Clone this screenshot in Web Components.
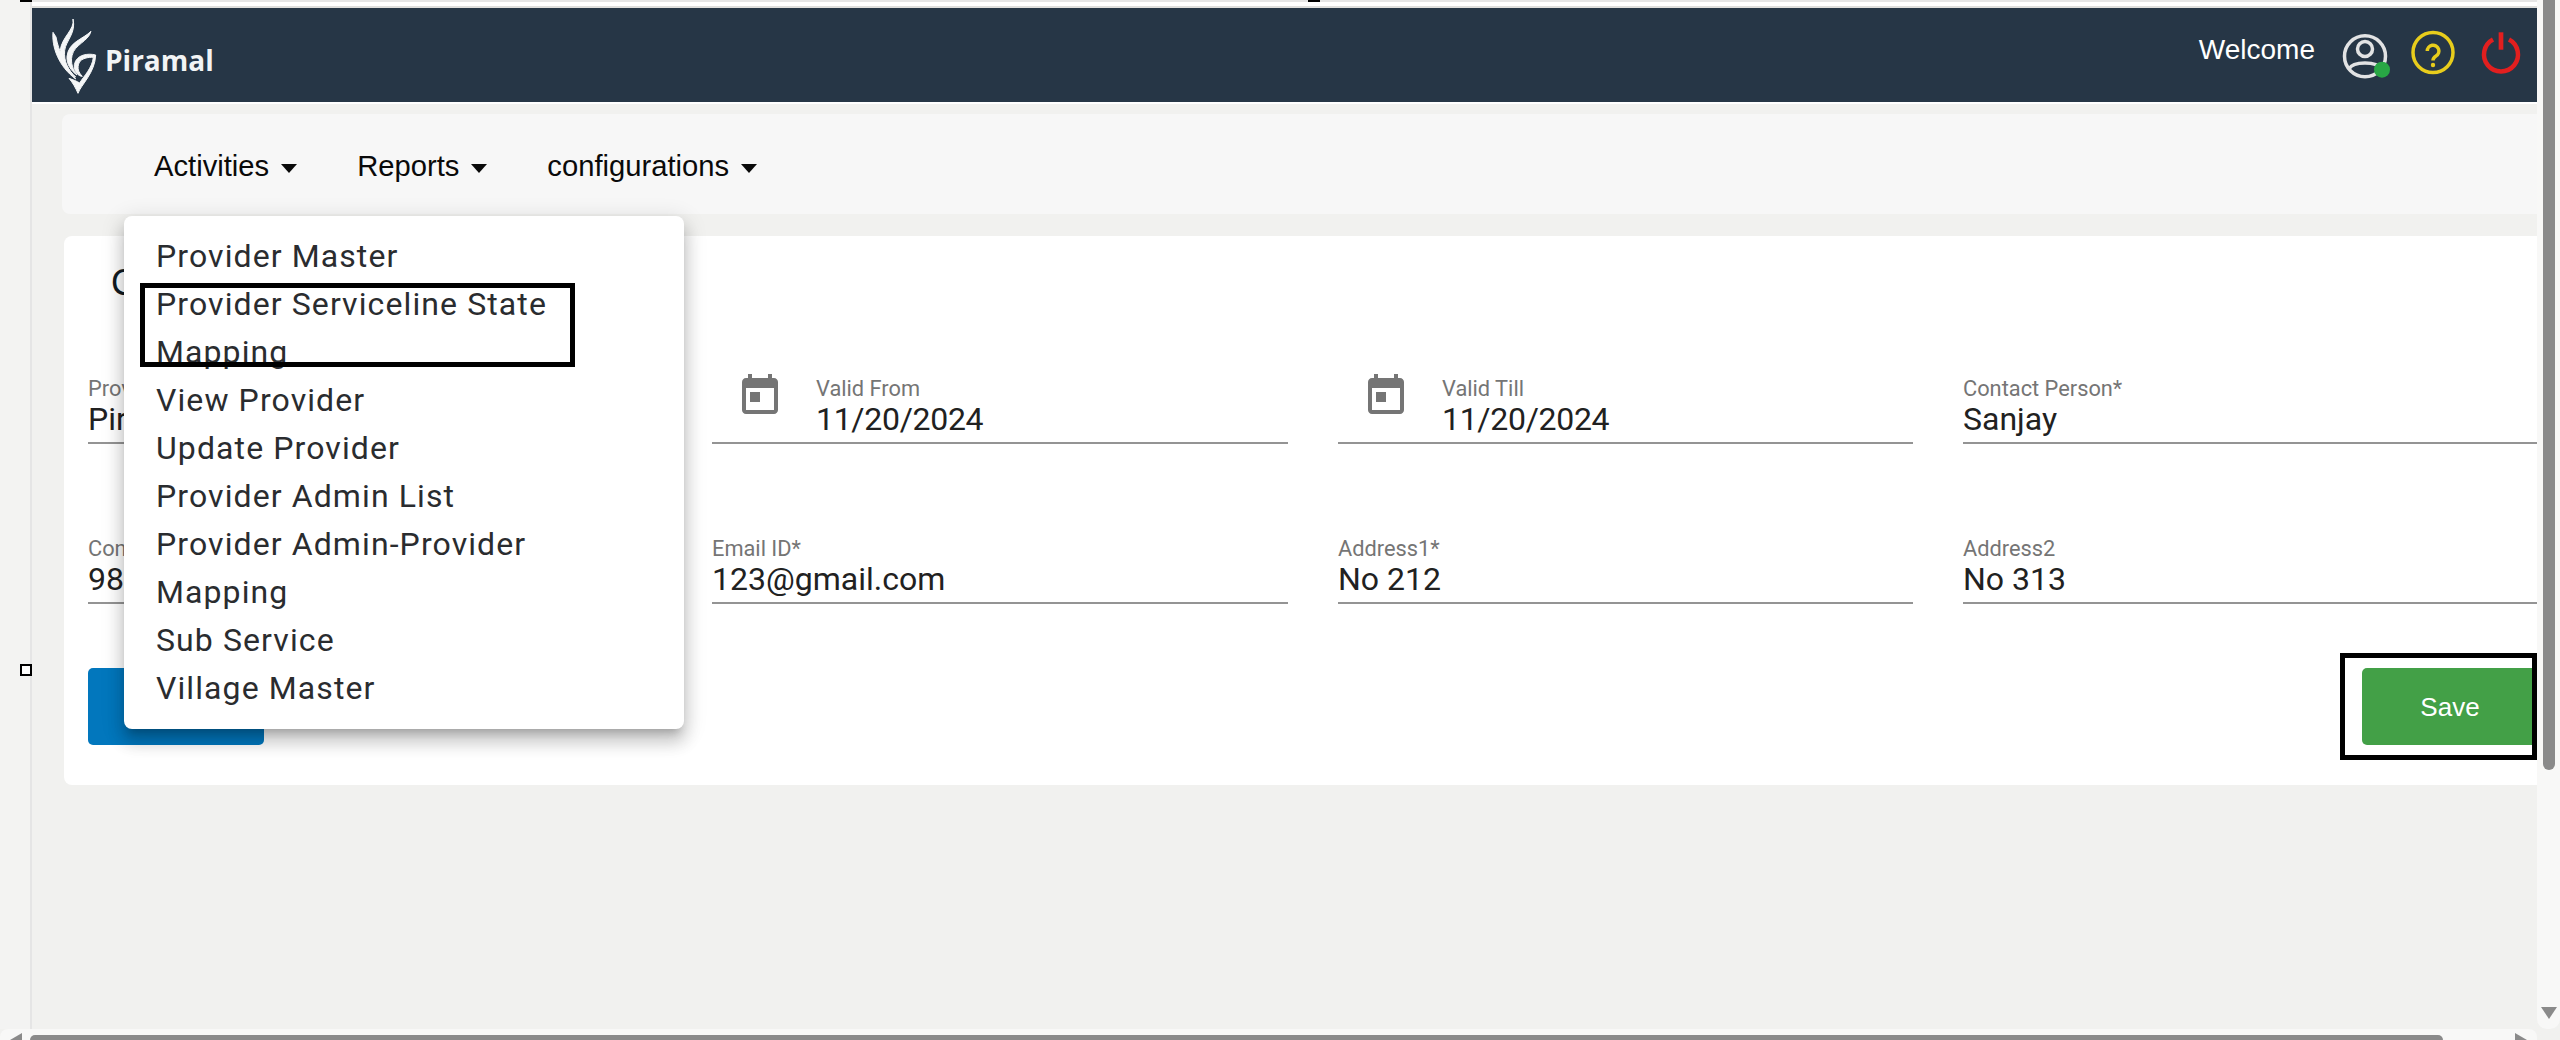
<!DOCTYPE html>
<html lang="en">
<head>
<meta charset="utf-8">
<title>Provider</title>
<style>
    html, body { margin: 0; padding: 0; background: #f1f1ef; overflow: hidden; }
</style>
</head>
<body>
<app-shell>
    <top-bar></top-bar>
    <sub-nav>
        <nav-item>Activities</nav-item>
        <nav-item>Reports</nav-item>
        <nav-item>configurations</nav-item>
    </sub-nav>
    <form-card heading="C">
        <form-field label="Prov" value="Pir"></form-field>
        <form-field label="Valid From" value="11/20/2024" date></form-field>
        <form-field label="Valid Till" value="11/20/2024" date></form-field>
        <form-field label="Contact Person*" value="Sanjay"></form-field>
        <form-field label="Con" value="98"></form-field>
        <form-field label="Email ID*" value="123@gmail.com"></form-field>
        <form-field label="Address1*" value="No 212"></form-field>
        <form-field label="Address2" value="No 313"></form-field>
    </form-card>
    <menu-panel slot="over">
        <menu-row>Provider Master</menu-row>
        <menu-row>Provider Serviceline State Mapping</menu-row>
        <menu-row>View Provider</menu-row>
        <menu-row>Update Provider</menu-row>
        <menu-row>Provider Admin List</menu-row>
        <menu-row>Provider Admin-Provider Mapping</menu-row>
        <menu-row>Sub Service</menu-row>
        <menu-row>Village Master</menu-row>
    </menu-panel>
    <mark-box slot="over" style="left:140px;top:283px;width:435px;height:84px"></mark-box>
    <mark-box slot="over" style="left:2340px;top:653px;width:197px;height:107px"></mark-box>
    <mark-box slot="over" tick style="left:20px;top:0;width:12px;height:2px"></mark-box>
    <mark-box slot="over" tick style="left:1308px;top:0;width:12px;height:2px"></mark-box>
    <mark-box slot="over" handle style="left:20px;top:664px;width:12px;height:12px"></mark-box>
</app-shell>

<script>
const shellTemplate = document.createElement('template');
shellTemplate.innerHTML = `
    <style>
        :host {
            display: grid;
            position: relative;
            grid-template-columns: 32px 2505px 23px;
            grid-template-rows: 1029px 11px;
            width: 2560px;
            height: 1040px;
            overflow: hidden;
            background: #f1f1ef;
        }
        #rail {
            background: #f3f3f2;
            border-right: 2px solid #e5e5e5;
        }
        #main {
            overflow: hidden;
            display: flex;
            flex-direction: column;
        }
        #strip {
            height: 4px;
            flex: none;
            background: #fff;
            border-top: 2px solid #e5e5e5;
            border-bottom: 2px solid #dfdfdd;
        }
        #vbar {
            position: relative;
            background: #f8f8f7;
            border-radius: 0 0 10px 10px;
        }
        #vthumb {
            width: 12px;
            height: 770px;
            margin-left: 6px;
            background: #8a8a8a;
            border-radius: 0 0 6px 6px;
        }
        #vdown {
            position: absolute;
            left: 4px;
            top: 1007px;
            border: 8px solid transparent;
            border-top: 12px solid #8a8a8a;
            border-bottom: 0;
        }
        #hbar {
            grid-column: 1 / 3;
            position: relative;
            background: #f8f8f7;
            border-radius: 8px 8px 0 0;
        }
        #hthumb {
            position: absolute;
            left: 30px;
            top: 6px;
            width: 2413px;
            height: 5px;
            background: #8a8a8a;
            border-radius: 5px 5px 0 0;
        }
        #hleft, #hright {
            position: absolute;
            top: 4px;
            width: 12px;
            height: 7px;
            background: #8a8a8a;
        }
        #hleft { left: 10px; clip-path: polygon(100% 0, 100% 100%, 0 100%); }
        #hright { left: 2515px; clip-path: polygon(0 0, 100% 100%, 0 100%); }
    </style>
    <div id="rail"></div>
    <div id="main">
        <div id="strip"></div>
        <slot></slot>
    </div>
    <div id="vbar"><div id="vthumb"></div><div id="vdown"></div></div>
    <div id="hbar"><div id="hleft"></div><div id="hthumb"></div><div id="hright"></div></div>
    <slot name="over"></slot>
`;

class AppShell extends HTMLElement {
    constructor() {
        super();
        this.attachShadow({ mode: 'open' });
        this.shadowRoot.appendChild(shellTemplate.content.cloneNode(true));
    }
}

const barTemplate = document.createElement('template');
barTemplate.innerHTML = `
    <style>
        :host {
            display: flex;
            flex: none;
            align-items: center;
            height: 94px;
            border-bottom: 2px solid #fff;
            background: #263646;
            color: #fff;
        }
        #logo { display: block; margin-left: 13px; }
        #brand {
            margin-left: -10px;
            padding-top: 9px;
            font: 700 28px/40px "Open Sans", sans-serif;
            color: #f2f4f5;
        }
        #welcome {
            margin-left: auto;
            margin-right: 25px;
            margin-top: -10px;
            font: 28px/36px "Liberation Sans", Arial, sans-serif;
        }
        #icons {
            display: flex;
            gap: 18px;
            margin-right: 11px;
        }
        svg.icon { display: block; fill: none; }
    </style>
    <svg id="logo" width="70" height="85" viewBox="0 0 210 255" fill="#f4f6f7" stroke="#f4f6f7" stroke-width="3" stroke-linejoin="round">
        <path d="M24 58C20 100 40 160 92 198C62 160 40 112 33 72Z"/>
        <path d="M84 18C90 50 50 72 46 112C44 150 70 180 92 192C68 170 56 145 59 112C63 82 94 60 84 18Z"/>
        <path d="M138 55C112 80 72 86 66 130C64 155 80 175 96 186C84 170 76 150 81 128C88 94 130 86 138 55Z"/>
        <path d="M152 126C130 120 94 124 88 155C86 175 100 190 112 190C100 178 96 165 102 150C108 136 130 132 145 133C142 165 116 190 104 210C96 205 84 200 72 196C84 210 92 225 99 241C108 215 150 180 152 126Z"/>
    </svg>
    <span id="brand">Piramal</span>
    <span id="welcome">Welcome</span>
    <div id="icons">
        <svg class="icon" width="50" height="60" viewBox="0 0 50 60" stroke="#e2e3e4" stroke-width="3.5">
            <circle cx="25" cy="31.3" r="20.5"/>
            <circle cx="25" cy="24" r="7.5"/>
            <path d="M9 44C13 36 37 36 41 44"/>
            <circle cx="42" cy="44.7" r="8" fill="#28a745" stroke="none"/>
        </svg>
        <svg class="icon" width="50" height="60" viewBox="0 0 50 60" stroke="#e8cd1c" stroke-width="3.5">
            <circle cx="25" cy="27.5" r="20"/>
            <path d="M19.3 26a5.8 5.8 0 1 1 8.7 5c-2 1.2-3 2.3-3 4.5"/>
            <circle cx="25" cy="40" r="2.2" fill="#e8cd1c" stroke="none"/>
        </svg>
        <svg class="icon" width="50" height="60" viewBox="0 0 50 60" stroke="#e21f1f" stroke-width="4.5">
            <path d="M17 14.5A17 17 0 1 0 33 14.5"/>
            <path d="M25 7.3V24.7" stroke-width="4.7"/>
        </svg>
    </div>
`;

class TopBar extends HTMLElement {
    constructor() {
        super();
        this.attachShadow({ mode: 'open' });
        this.shadowRoot.appendChild(barTemplate.content.cloneNode(true));
    }
}

const subNavTemplate = document.createElement('template');
subNavTemplate.innerHTML = `
    <style>
        :host {
            display: flex;
            flex: none;
            align-items: center;
            gap: 60px;
            height: 100px;
            margin: 10px 0 0 30px;
            padding: 4px 0 0 92px;
            box-sizing: border-box;
            background: #f7f7f7;
            border-radius: 8px 0 0 8px;
        }
    </style>
    <slot></slot>
`;

class SubNav extends HTMLElement {
    constructor() {
        super();
        this.attachShadow({ mode: 'open' });
        this.shadowRoot.appendChild(subNavTemplate.content.cloneNode(true));
    }
}

const navItemTemplate = document.createElement('template');
navItemTemplate.innerHTML = `
    <style>
        :host {
            display: inline-flex;
            align-items: center;
            gap: 12px;
            font: 29.2px/40px "Liberation Sans", Arial, sans-serif;
            color: #0a0a0a;
        }
        i {
            margin-top: 4px;
            border: 8px solid transparent;
            border-top: 9px solid #0a0a0a;
            border-bottom: 0;
        }
    </style>
    <slot></slot><i></i>
`;

class NavItem extends HTMLElement {
    constructor() {
        super();
        this.attachShadow({ mode: 'open' });
        this.shadowRoot.appendChild(navItemTemplate.content.cloneNode(true));
    }
}

const cardTemplate = document.createElement('template');
cardTemplate.innerHTML = `
    <style>
        :host {
            display: block;
            flex: none;
            height: 549px;
            margin: 22px 0 0 32px;
            box-sizing: border-box;
            padding: 24px 0 0 24px;
            background: #fff;
            border-radius: 8px 0 0 8px;
            overflow: hidden;
        }
        h2 {
            margin: 0 0 0 23px;
            font: 400 36px/46px "Liberation Sans", Arial, sans-serif;
            color: #111a22;
        }
        #grid {
            display: grid;
            grid-template-columns: 574px 576px 575px 576px;
            column-gap: 50px;
            row-gap: 92px;
            margin-top: 70px;
        }
        #actions {
            display: flex;
            justify-content: space-between;
            margin-top: 64px;
        }
        button {
            width: 176px;
            height: 77px;
            padding: 2px 0 0;
            border: 0;
            border-radius: 5px;
            color: #fff;
            font: 26px "Liberation Sans", Arial, sans-serif;
        }
        #back { background: #0277bd; }
        #save { background: #43a047; margin-right: -1px; }
    </style>
    <h2 id="title"></h2>
    <div id="grid"><slot></slot></div>
    <div id="actions">
        <button id="back" aria-hidden="true"></button>
        <button id="save">Save</button>
    </div>
`;

class FormCard extends HTMLElement {
    constructor() {
        super();
        this.attachShadow({ mode: 'open' });
        this.shadowRoot.appendChild(cardTemplate.content.cloneNode(true));
        this.shadowRoot.querySelector('#title').textContent = this.getAttribute('heading');
    }
}

const fieldTemplate = document.createElement('template');
fieldTemplate.innerHTML = `
    <style>
        :host {
            display: flex;
            height: 68px;
            padding-top: 1px;
            box-sizing: border-box;
            border-bottom: 2px solid #949494;
            font-family: Roboto, sans-serif;
        }
        svg {
            display: none;
            flex: none;
            margin: -5px 32px 0 24px;
            fill: #757575;
        }
        :host([date]) svg { display: block; }
        :host([date]) #value { letter-spacing: -.3px; }
        #label {
            font-size: 21.8px;
            line-height: 24px;
            color: #757575;
        }
        #value {
            font-size: 32px;
            line-height: 36px;
            color: #212121;
            white-space: nowrap;
        }
    </style>
    <svg width="48" height="48" viewBox="0 0 24 24">
        <path d="M19 3h-1V1h-2v2H8V1H6v2H5c-1.11 0-1.99.9-1.99 2L3 19c0 1.1.89 2 2 2h14c1.1 0 2-.9 2-2V5c0-1.1-.9-2-2-2zm0 16H5V8h14v11zM7 10h5v5H7z"/>
    </svg>
    <div>
        <div id="label"></div>
        <div id="value"></div>
    </div>
`;

class FormField extends HTMLElement {
    constructor() {
        super();
        this.attachShadow({ mode: 'open' });
        this.shadowRoot.appendChild(fieldTemplate.content.cloneNode(true));
        this.shadowRoot.querySelector('#label').textContent = this.getAttribute('label');
        this.shadowRoot.querySelector('#value').textContent = this.getAttribute('value');
    }
}

const menuTemplate = document.createElement('template');
menuTemplate.innerHTML = `
    <style>
        :host {
            display: block;
            position: absolute;
            left: 124px;
            top: 216px;
            width: 560px;
            height: 513px;
            box-sizing: border-box;
            padding: 16px 70px 17px 32px;
            background: #fff;
            border-radius: 8px;
            box-shadow: 0 8px 8px -5px rgba(0, 0, 0, .2), 0 13px 16px 2px rgba(0, 0, 0, .14), 0 5px 22px 3px rgba(0, 0, 0, .12);
        }
    </style>
    <slot></slot>
`;

class MenuPanel extends HTMLElement {
    constructor() {
        super();
        this.attachShadow({ mode: 'open' });
        this.shadowRoot.appendChild(menuTemplate.content.cloneNode(true));
    }
}

const rowTemplate = document.createElement('template');
rowTemplate.innerHTML = `
    <style>
        :host {
            display: block;
            font: 400 32px/48px Roboto, sans-serif;
            letter-spacing: 1.1px;
            color: #2a2c2f;
        }
    </style>
    <slot></slot>
`;

class MenuRow extends HTMLElement {
    constructor() {
        super();
        this.attachShadow({ mode: 'open' });
        this.shadowRoot.appendChild(rowTemplate.content.cloneNode(true));
    }
}

const markTemplate = document.createElement('template');
markTemplate.innerHTML = `
    <style>
        :host {
            display: block;
            position: absolute;
            box-sizing: border-box;
            border: 5px solid #000;
        }
        :host([tick]) {
            border: 0;
            background: #000;
        }
        :host([handle]) {
            border-width: 2px;
            background: #fff;
        }
    </style>
`;

class MarkBox extends HTMLElement {
    constructor() {
        super();
        this.attachShadow({ mode: 'open' });
        this.shadowRoot.appendChild(markTemplate.content.cloneNode(true));
    }
}

window.customElements.define('app-shell', AppShell);
window.customElements.define('top-bar', TopBar);
window.customElements.define('sub-nav', SubNav);
window.customElements.define('nav-item', NavItem);
window.customElements.define('form-card', FormCard);
window.customElements.define('form-field', FormField);
window.customElements.define('menu-panel', MenuPanel);
window.customElements.define('menu-row', MenuRow);
window.customElements.define('mark-box', MarkBox);
</script>
</body>
</html>
